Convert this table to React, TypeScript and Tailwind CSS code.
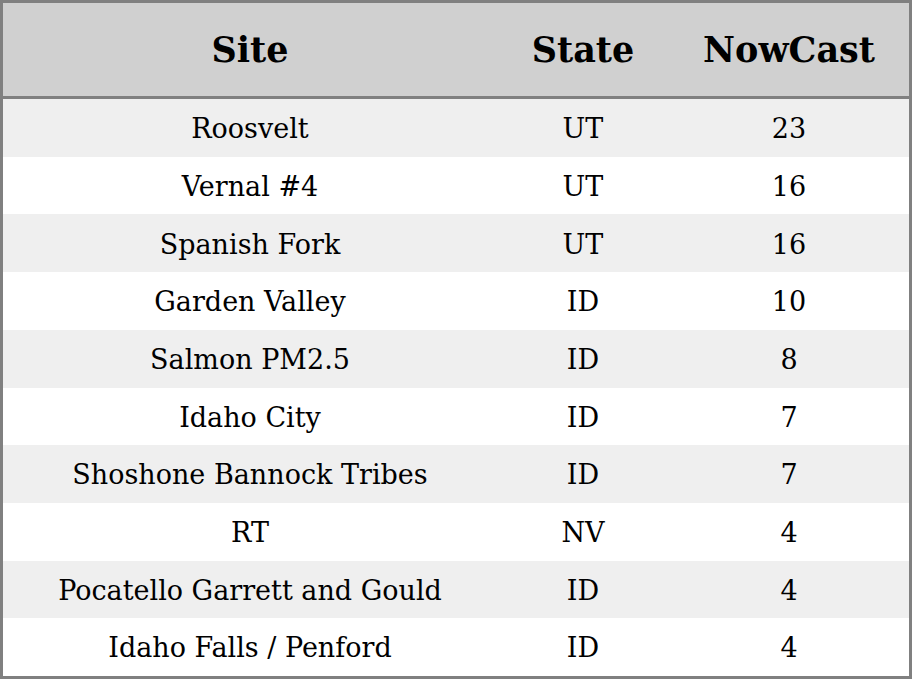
const ROWS = [
  { site: "Roosvelt", state: "UT", nowcast: 23 },
  { site: "Vernal #4", state: "UT", nowcast: 16 },
  { site: "Spanish Fork", state: "UT", nowcast: 16 },
  { site: "Garden Valley", state: "ID", nowcast: 10 },
  { site: "Salmon PM2.5", state: "ID", nowcast: 8 },
  { site: "Idaho City", state: "ID", nowcast: 7 },
  { site: "Shoshone Bannock Tribes", state: "ID", nowcast: 7 },
  { site: "RT", state: "NV", nowcast: 4 },
  { site: "Pocatello Garrett and Gould", state: "ID", nowcast: 4 },
  { site: "Idaho Falls / Penford", state: "ID", nowcast: 4 },
];

export default function App() {
  return (
    <div className="w-[912px] h-[679px] border-[3px] border-[#808080] bg-white font-['DejaVu_Serif',serif] text-black flex flex-col">
      <div className="grid grid-cols-[494px_172px_1fr] h-[96px] bg-[#d0d0d0] border-b-[3px] border-[#808080] items-center text-center text-[35px] font-bold pt-[2px]">
        <div>Site</div>
        <div>State</div>
        <div>NowCast</div>
      </div>
      {ROWS.map((row, i) => (
        <div
          key={row.site}
          className={`grid grid-cols-[494px_172px_1fr] flex-1 items-center text-center text-[27px] pt-[3px] ${
            i % 2 === 0 ? "bg-[#efefef]" : "bg-white"
          }`}
        >
          <div>{row.site}</div>
          <div>{row.state}</div>
          <div>{row.nowcast}</div>
        </div>
      ))}
    </div>
  );
}
